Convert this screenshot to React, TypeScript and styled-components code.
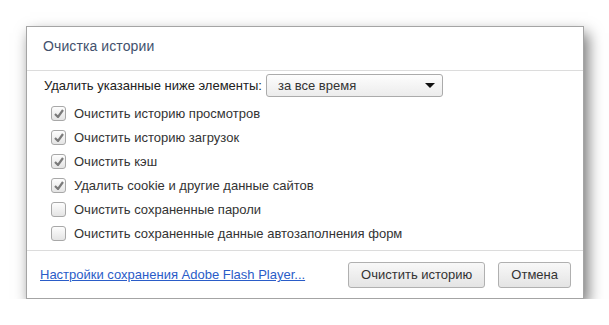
import styled, { createGlobalStyle } from 'styled-components'

const items = [
  { label: 'Очистить историю просмотров', checked: true },
  { label: 'Очистить историю загрузок', checked: true },
  { label: 'Очистить кэш', checked: true },
  { label: 'Удалить cookie и другие данные сайтов', checked: true },
  { label: 'Очистить сохраненные пароли', checked: false },
  { label: 'Очистить сохраненные данные автозаполнения форм', checked: false },
]

export default function App() {
  return (
    <>
      <GlobalStyle />
      <Dialog>
        <Header>Очистка истории</Header>
        <Body>
          <PeriodRow>
            <span>Удалить указанные ниже элементы:</span>
            <Select>
              <span>за все время</span>
              <Arrow />
            </Select>
          </PeriodRow>
          {items.map((item) => (
            <CheckRow key={item.label}>
              <Box>
                {item.checked && (
                  <svg width="10" height="9" viewBox="0 0 10 9">
                    <path d="M1 5 L4 8 L9 1" fill="none" stroke="#7a7a7a" strokeWidth="2.2" />
                  </svg>
                )}
              </Box>
              {item.label}
            </CheckRow>
          ))}
        </Body>
        <Footer>
          <Link href="#">Настройки сохранения Adobe Flash Player...</Link>
          <Buttons>
            <Button>Очистить историю</Button>
            <Button>Отмена</Button>
          </Buttons>
        </Footer>
      </Dialog>
    </>
  )
}

const GlobalStyle = createGlobalStyle`
  body {
    margin: 0;
    background: #fff;
    font-family: "Liberation Sans", Arial, sans-serif;
    font-size: 13px;
    color: #222;
  }
`

const Dialog = styled.div`
  width: 558px;
  height: 273px;
  margin: 26px 0 0 26px;
  background: #fff;
  border: 1px solid #a4a4a4;
  box-sizing: border-box;
  box-shadow: 4px 7px 14px rgba(0, 0, 0, 0.55);
  display: flex;
  flex-direction: column;
`

const Header = styled.div`
  height: 44px;
  padding: 11px 0 0 16px;
  box-sizing: border-box;
  border-bottom: 1px solid #dcdcdc;
  color: #43516d;
  font-size: 14px;
  letter-spacing: 0.1px;
`

const Body = styled.div`
  padding: 2px 0 0 17px;
  display: flex;
  flex-direction: column;
  border-bottom: 1px solid #dcdcdc;
  height: 180px;
  box-sizing: border-box;
`

const PeriodRow = styled.div`
  display: flex;
  align-items: center;
  gap: 4px;
  height: 24px;
  margin-bottom: 4px;
`

const Select = styled.div`
  width: 177px;
  height: 23px;
  box-sizing: border-box;
  border: 1px solid #ababab;
  border-radius: 3px;
  background: linear-gradient(#fdfdfd, #ececec);
  display: flex;
  align-items: center;
  justify-content: space-between;
  padding: 0 7px 0 11px;
  color: #333;
`

const Arrow = styled.span`
  width: 0;
  height: 0;
  border-left: 5px solid transparent;
  border-right: 5px solid transparent;
  border-top: 5px solid #111;
`

const CheckRow = styled.label`
  display: flex;
  align-items: center;
  gap: 8px;
  height: 24px;
  padding-left: 7px;
  color: #333;
`

const Box = styled.span`
  width: 15px;
  height: 15px;
  box-sizing: border-box;
  border: 1px solid #a8a8a8;
  border-radius: 3px;
  background: linear-gradient(#fdfdfd, #e4e4e4);
  display: flex;
  align-items: center;
  justify-content: center;
`

const Footer = styled.div`
  flex: 1;
  display: flex;
  align-items: center;
  justify-content: space-between;
  padding: 0 12px 0 13px;
`

const Link = styled.a`
  color: #2a5cc8;
  text-decoration: underline;
`

const Buttons = styled.div`
  display: flex;
  gap: 13px;
`

const Button = styled.button`
  height: 26px;
  padding: 0 12px;
  border: 1px solid #b0b0b0;
  border-radius: 3px;
  background: linear-gradient(#f8f8f8, #e4e4e4);
  font-family: "Liberation Sans", Arial, sans-serif;
  font-size: 13px;
  color: #333;
`
